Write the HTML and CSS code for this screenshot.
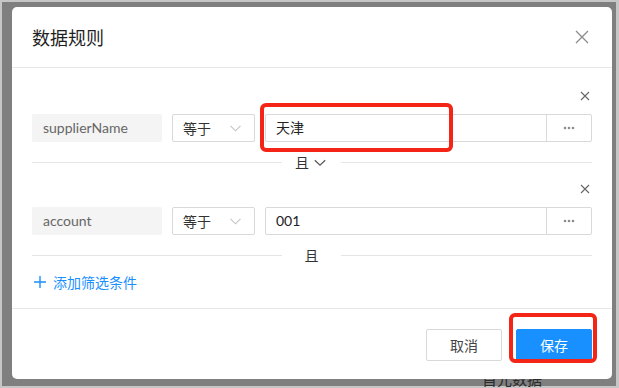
FILE: index.html
```html
<!DOCTYPE html>
<html lang="zh-CN">
<head>
<meta charset="utf-8">
<title>数据规则</title>
<link rel="stylesheet" href="styles.css">
</head>
<body>
<div class="screen">
  <div class="overlay">
    <div class="backdrop-text">首元数据</div>
    <div class="modal">
      <div class="modal-header">
        <span class="modal-title">数据规则</span>
        <svg class="modal-close" width="14" height="14" viewBox="0 0 14 14"><path d="M1 1L13 13M13 1L1 13" stroke="#8c8c8c" stroke-width="1.3" fill="none"/></svg>
      </div>
      <div class="modal-body">
        <div class="rule">
          <div class="rule-close"><svg width="10" height="10" viewBox="0 0 10 10"><path d="M1 1L9 9M9 1L1 9" stroke="#666" stroke-width="1.1" fill="none"/></svg></div>
          <div class="rule-row">
            <div class="field">supplierName</div>
            <div class="select"><span>等于</span><svg width="11" height="7" viewBox="0 0 11 7"><path d="M0.5 0.8L5.5 5.8L10.5 0.8" stroke="#c4c4c4" stroke-width="1.1" fill="none"/></svg></div>
            <div class="value-group">
              <div class="value">天津</div>
              <div class="more"><svg width="12" height="4" viewBox="0 0 12 4"><circle cx="2" cy="2" r="1.3" fill="#8c8c8c"/><circle cx="6" cy="2" r="1.3" fill="#8c8c8c"/><circle cx="10" cy="2" r="1.3" fill="#8c8c8c"/></svg></div>
            </div>
          </div>
        </div>
        <div class="separator">
          <div class="sep-line"></div>
          <div class="sep-label">且<svg class="sep-arrow" width="12" height="8" viewBox="0 0 12 8"><path d="M0.8 1.2L6 6.2L11.2 1.2" stroke="#555" stroke-width="1.2" fill="none"/></svg></div>
          <div class="sep-line right"></div>
        </div>
        <div class="rule">
          <div class="rule-close"><svg width="10" height="10" viewBox="0 0 10 10"><path d="M1 1L9 9M9 1L1 9" stroke="#666" stroke-width="1.1" fill="none"/></svg></div>
          <div class="rule-row">
            <div class="field">account</div>
            <div class="select"><span>等于</span><svg width="11" height="7" viewBox="0 0 11 7"><path d="M0.5 0.8L5.5 5.8L10.5 0.8" stroke="#c4c4c4" stroke-width="1.1" fill="none"/></svg></div>
            <div class="value-group">
              <div class="value">001</div>
              <div class="more"><svg width="12" height="4" viewBox="0 0 12 4"><circle cx="2" cy="2" r="1.3" fill="#8c8c8c"/><circle cx="6" cy="2" r="1.3" fill="#8c8c8c"/><circle cx="10" cy="2" r="1.3" fill="#8c8c8c"/></svg></div>
            </div>
          </div>
        </div>
        <div class="separator">
          <div class="sep-line"></div>
          <div class="sep-label plain">且</div>
          <div class="sep-line right"></div>
        </div>
        <div class="add-rule">
          <svg width="12" height="12" viewBox="0 0 12 12"><path d="M6 0V12M0 6H12" stroke="#1890ff" stroke-width="1.4" fill="none"/></svg>
          <span>添加筛选条件</span>
        </div>
      </div>
      <div class="modal-footer">
        <button class="btn">取消</button>
        <button class="btn btn-primary">保存</button>
      </div>
      <div class="mark mark-input"></div>
      <div class="mark mark-save"></div>
    </div>
  </div>
</div>
</body>
</html>
```

FILE: styles.css
```css
* { box-sizing: border-box; }
html, body { margin: 0; padding: 0; }
body {
  background: #c6c6c6;
  font-family: "Noto Sans CJK SC", "Noto Sans", sans-serif;
  width: 619px;
  height: 388px;
  overflow: hidden;
}
.screen {
  padding: 2px 3px 2px 2px;
}
.overlay {
  position: relative;
  background: #7f7f7f;
  width: 614px;
  height: 384px;
  padding: 5px 0 0 10px;
}
.backdrop-text {
  position: absolute;
  left: 480px;
  top: 367px;
  font-size: 15px;
  line-height: 20px;
  color: #2b2b2b;
}
.modal {
  position: relative;
  width: 600px;
  height: 372px;
  background: #fff;
  border-radius: 5px;
  display: flex;
  flex-direction: column;
}
.modal-header {
  height: 61px;
  border-bottom: 1px solid #e8e8e8;
  display: flex;
  align-items: center;
  justify-content: space-between;
  padding: 0 23px 1px 20px;
}
.modal-title {
  font-size: 18px;
  color: #1f1f1f;
  line-height: 24px;
}
.modal-body {
  flex: 1;
  padding: 21px 20px 0 20px;
}
.rule-close {
  height: 14px;
  display: flex;
  justify-content: flex-end;
  align-items: center;
  padding-right: 2px;
}
.rule-row {
  margin-top: 11px;
  display: flex;
  gap: 10px;
  height: 28px;
}
.field {
  width: 130px;
  background: #f4f4f4;
  border-radius: 2px;
  color: #666;
  font-family: Lato, "Noto Sans CJK SC", sans-serif;
  font-size: 14px;
  line-height: 28px;
  padding-left: 11px;
}
.select {
  width: 83px;
  border: 1px solid #d9d9d9;
  border-radius: 2px;
  display: flex;
  align-items: center;
  justify-content: space-between;
  padding: 0 13px 0 10px;
  font-size: 14px;
  color: #333;
}
.value-group {
  flex: 1;
  display: flex;
  border: 1px solid #d9d9d9;
  border-radius: 2px;
}
.value {
  flex: 1;
  font-family: Lato, "Noto Sans CJK SC", sans-serif;
  font-size: 14px;
  color: #222;
  line-height: 26px;
  padding-left: 10px;
}
.more {
  width: 45px;
  border-left: 1px solid #d9d9d9;
  display: flex;
  align-items: center;
  justify-content: center;
}
.separator {
  height: 40px;
  display: flex;
  align-items: center;
}
.sep-line {
  width: 250px;
  height: 1px;
  background: #e5e5e5;
}
.sep-line.right {
  flex: 1;
  width: auto;
}
.sep-label {
  width: 59px;
  display: flex;
  align-items: center;
  justify-content: center;
  gap: 5px;
  font-size: 14px;
  color: #333;
  padding-right: 2px;
}
.sep-label.plain {
  padding-left: 2px;
}
.sep-arrow { margin-top: 1px; }
.add-rule {
  height: 14px;
  display: flex;
  align-items: center;
  gap: 7px;
  padding-left: 2px;
  color: #1890ff;
  font-size: 14px;
}
.modal-footer {
  height: 71px;
  border-top: 1px solid #e8e8e8;
  display: flex;
  justify-content: flex-end;
  align-items: flex-start;
  gap: 14px;
  padding: 20px 20px 0 0;
}
.btn {
  width: 76px;
  height: 32px;
  border: 1px solid #d9d9d9;
  background: #fff;
  border-radius: 2px;
  font-family: inherit;
  font-size: 14px;
  color: #444;
  padding: 0;
}
.btn-primary {
  background: #1890ff;
  border-color: #1890ff;
  color: #fff;
}
.mark {
  position: absolute;
  border: 4px solid #f42416;
  border-radius: 6px;
}
.mark-input {
  left: 248px;
  top: 96px;
  width: 193px;
  height: 49px;
}
.mark-save {
  left: 497px;
  top: 306px;
  width: 88px;
  height: 50px;
}
```
